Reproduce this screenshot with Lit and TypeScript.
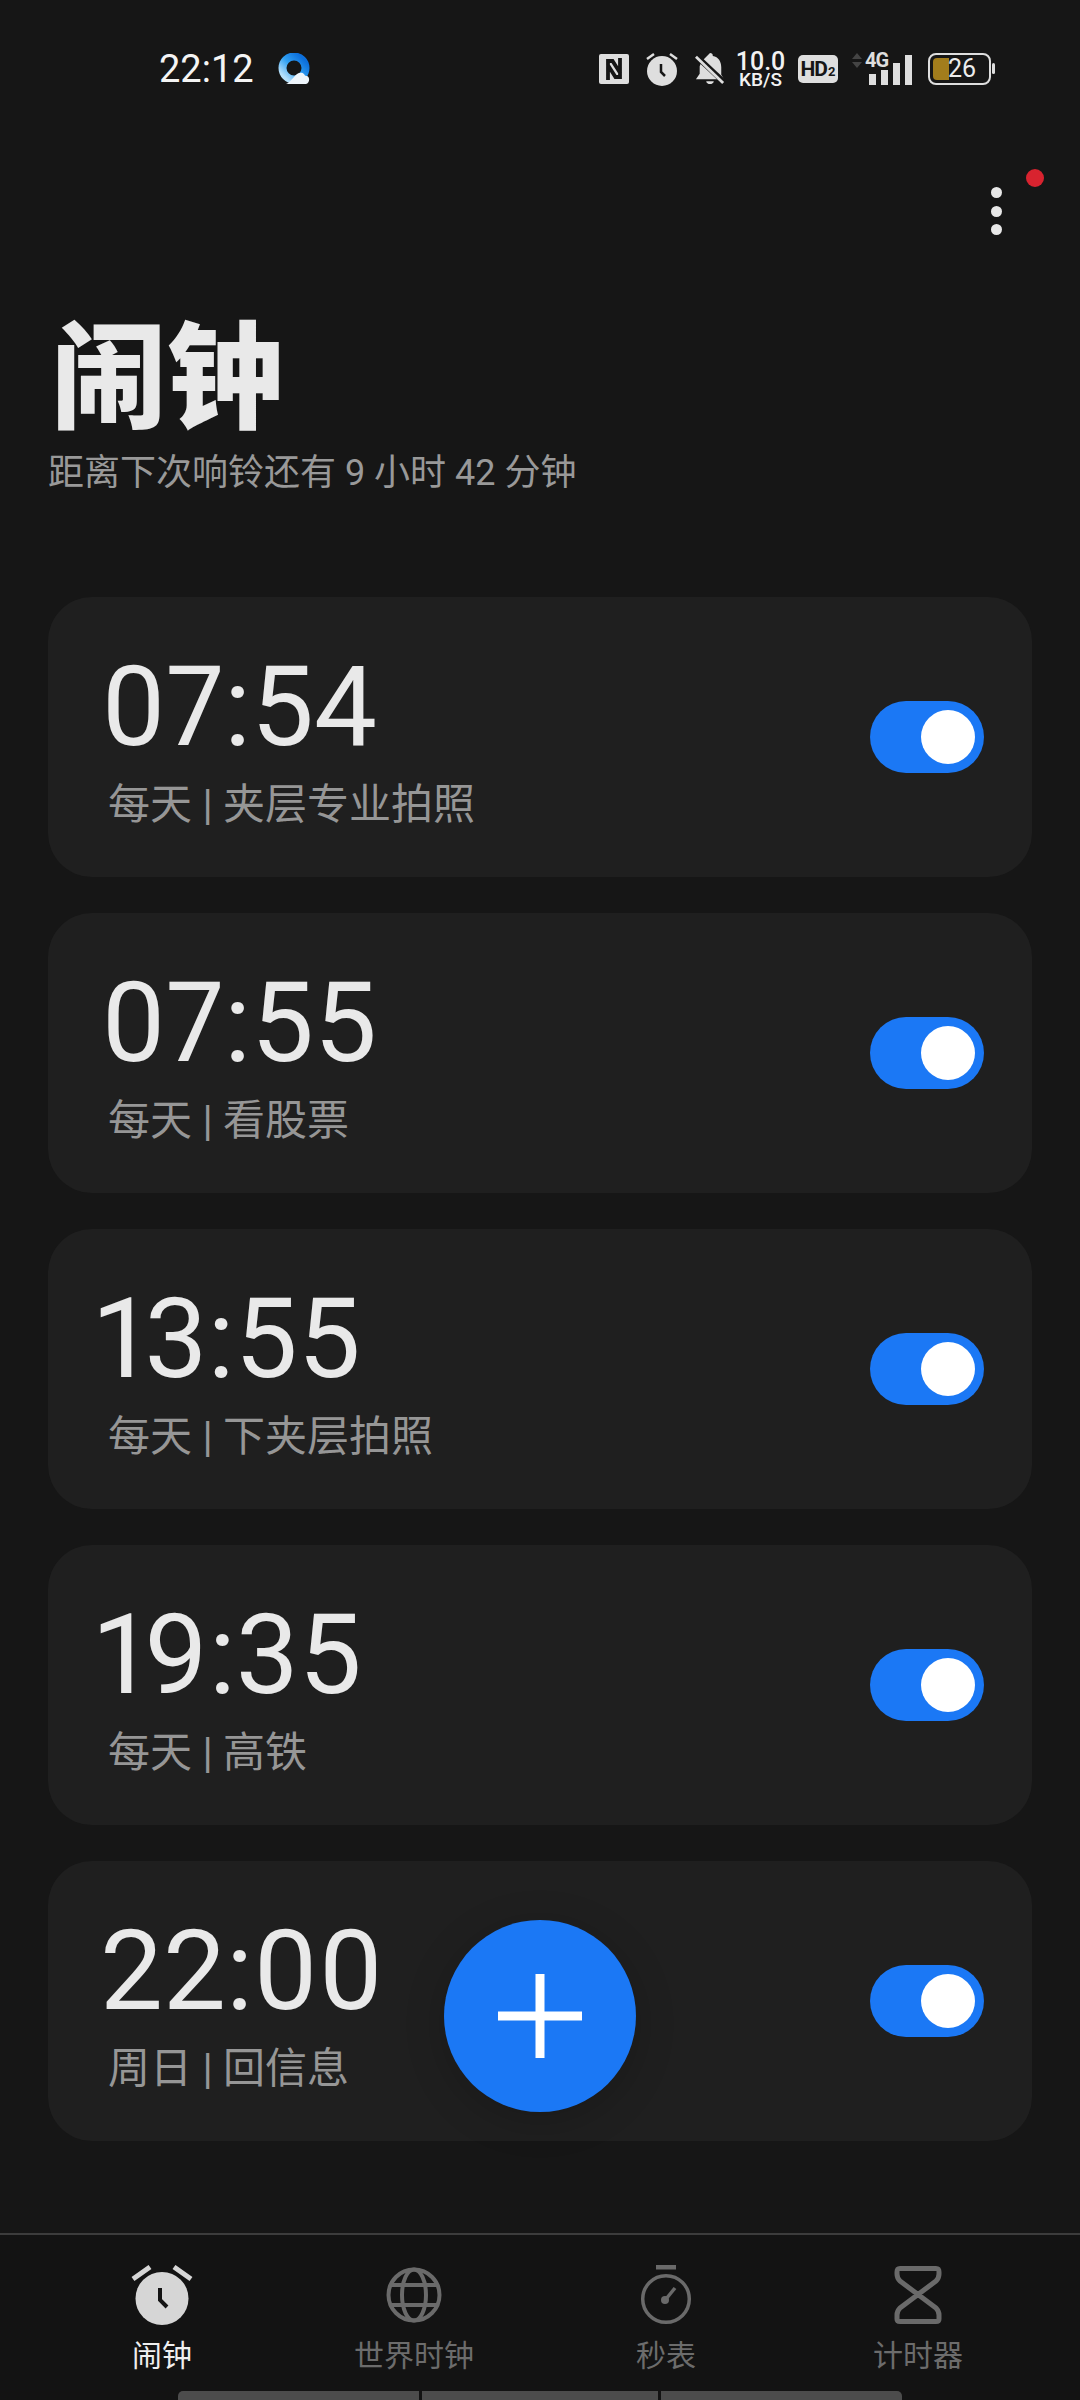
import { LitElement, html, css, svg } from "lit";
import { customElement } from "lit/decorators.js";

const alarms = [
  { time: "07:54", label: "每天 | 夹层专业拍照", shift: -7 },
  { time: "07:55", label: "每天 | 看股票", shift: -7 },
  { time: "13:55", label: "每天 | 下夹层拍照", shift: -12 },
  { time: "19:35", label: "每天 | 高铁", shift: -12 },
  { time: "22:00", label: "周日 | 回信息", shift: -8 },
];

const nfc = svg`<svg width="30" height="30" viewBox="0 0 30 30"><rect width="30" height="30" rx="2" fill="#dedede"/><path d="M9 26V7h4.500l8 12.500M21 4v19h-4.500l-7-11" fill="none" stroke="#161616" stroke-width="3.800"/></svg>`;
const alarmSmall = svg`<svg width="32" height="34" viewBox="0 0 32 34"><circle cx="16" cy="19" r="15" fill="#dedede"/><path d="M1 7l7-5M31 7l-7-5" stroke="#dedede" stroke-width="2.500"/><path d="M15 12v8l4 4" fill="none" stroke="#161616" stroke-width="2.500"/></svg>`;
const bell = svg`<svg width="30" height="32" viewBox="0 0 32 34"><path d="M16 0c2 0 3 1 3 3 6 1 9 6 9 12v8l3 5H1l4-6v-8l2-5z" fill="#dedede"/><path d="M12 30h8c0 2-2 3-4 3s-4-1-4-3z" fill="#dedede"/><path d="M1 3l30 28" stroke="#161616" stroke-width="6"/><path d="M1 4l29 28" stroke="#dedede" stroke-width="3"/></svg>`;
const navAlarm = svg`<svg width="62" height="64" viewBox="0 0 62 64"><circle cx="31" cy="33.500" r="26.500" fill="#d6d6d6"/><path d="M2 14l17-12M60 14L43 2" stroke="#d6d6d6" stroke-width="5"/><path d="M29 23v12l7 7" fill="none" stroke="#141414" stroke-width="4"/></svg>`;
const navGlobe = svg`<svg width="62" height="64" viewBox="0 0 62 64"><g fill="none" stroke="#6a6a6a" stroke-width="4"><circle cx="31" cy="30" r="25.500"/><ellipse cx="31" cy="30" rx="12" ry="25.500"/><path d="M8 20h46M8 40h46"/></g></svg>`;
const navWatch = svg`<svg width="62" height="64" viewBox="0 0 62 64"><rect x="21" y="0" width="20" height="4.500" fill="#6a6a6a"/><circle cx="31" cy="34" r="23.300" fill="none" stroke="#6a6a6a" stroke-width="3.500"/><path d="M31 34l9-11" stroke="#6a6a6a" stroke-width="3.500"/><circle cx="30" cy="35" r="4" fill="#6a6a6a"/></svg>`;
const navHour = svg`<svg width="62" height="64" viewBox="0 0 62 64"><path d="M13 3.500h36c3 0 3 2 3 3.500v2c0 3-1 5-3 7L31 29.500 13 43c-2 2-3 4-3 7v4c0 2 1 2.500 3 2.500h36c2 0 3-.5 3-2.500v-4c0-3-1-5-3-7L31 29.500 13 16c-2-2-3-4-3-7V7c0-1.500 0-3.500 3-3.500z" fill="none" stroke="#6a6a6a" stroke-width="5" stroke-linejoin="round"/></svg>`;
const plus = svg`<svg width="84" height="84" viewBox="0 0 84 84"><path d="M42 0v84M0 42h84" stroke="#fff" stroke-width="9"/></svg>`;
const logo = svg`<svg width="32" height="32" viewBox="0 0 32 32"><defs><linearGradient id="q" x1="0.900" y1="0.100" x2="0.100" y2="0.900"><stop offset="0" stop-color="#0c6fdc"/><stop offset="0.500" stop-color="#2f9ff2"/><stop offset="1" stop-color="#b5e0fb"/></linearGradient></defs><circle cx="16" cy="15" r="11.500" fill="none" stroke="url(#q)" stroke-width="8"/><path d="M8 31c3-1 5-4 8-7 2-3 7-6 10-3 1 2 2 2 3 2 3 1 3 7-1 8z" fill="#eef5fb"/></svg>`;
const signal = svg`<svg width="60" height="32" viewBox="0 0 60 32"><path d="M5 0l5 6H0zM5 15l5-6H0z" fill="#444"/><g fill="#dedede"><rect x="17" y="21" width="7" height="11"/><rect x="29" y="17" width="7" height="15"/><rect x="41" y="10" width="7" height="22"/><rect x="53" y="2" width="7" height="30"/></g></svg>`;
const battery = svg`<svg width="67" height="32" viewBox="0 0 67 32"><rect x="1" y="1" width="61" height="30" rx="7" fill="none" stroke="#dedede" stroke-width="2"/><path d="M9 5h12v22H9a4 4 0 0 1-4-4V9a4 4 0 0 1 4-4z" fill="#a27d1c"/><rect x="64" y="10" width="3" height="11" rx="1.500" fill="#dedede"/></svg>`;

@customElement("app-root")
export class AppRoot extends LitElement {
  static styles = css`
    :host { display: flex; flex-direction: column; position: relative; width: 1080px; height: 2400px; background: #161616; color: #e8e8e8; font-family: Roboto, "Noto Sans CJK SC", sans-serif; overflow: hidden; }
    svg { display: block; flex: none; }
    .status { display: flex; align-items: center; height: 68px; padding: 0 85px 0 159px; flex: none; margin-top: 35px; }
    .clock { font-size: 38px; color: #f4f4f4; line-height: 68px; width: 119px; }
    .icons { margin-left: auto; display: flex; align-items: center; }
    .m17 { margin-left: 17px; }
    .speed { margin-left: 11px; width: 49px; text-align: center; color: #f2f2f2; font-weight: 500; display: flex; flex-direction: column; align-items: center; }
    .speed b { font-size: 25px; line-height: 21px; font-weight: 500; }
    .speed i { font-size: 19px; line-height: 16px; font-style: normal; font-weight: 500; }
    .hd { margin-left: 13px; width: 40px; height: 28px; border-radius: 5px; background: #dedede; color: #161616; font-size: 21px; font-weight: 700; line-height: 28px; text-align: center; letter-spacing: -1px; white-space: nowrap; }
    .hd sub { font-size: 13px; vertical-align: baseline; letter-spacing: 0; margin-left: 1px; }
    .sig { position: relative; margin-left: 14px; }
    .sig span { position: absolute; left: 13px; top: -3px; font-size: 20px; font-weight: 700; color: #dedede; line-height: 20px; letter-spacing: -1px; }
    .bat { position: relative; margin-left: 16px; }
    .bat span { position: absolute; left: 20px; top: 0; line-height: 32px; font-size: 25px; color: #ececec; }
    .menu-row { display: flex; justify-content: flex-end; padding-right: 78px; position: relative; height: 68px; margin-top: 84px; flex: none; }
    .dots { display: flex; flex-direction: column; gap: 7.500px; }
    .dots i { display: block; width: 11px; height: 11px; border-radius: 50%; background: #e8e8e8; }
    .red { position: absolute; right: 36px; top: -18px; width: 18px; height: 18px; border-radius: 50%; background: #d8232f; }
    .head { padding-left: 48px; margin-top: 43px; flex: none; }
    .title { font-family: "Noto Sans CJK SC", sans-serif; font-size: 116px; font-weight: 900; line-height: 140px; color: #e9e9e9; padding-left: 3px; }
    .sub { font-size: 36px; line-height: 48px; color: #999; margin-top: 11px; }
    .list { display: flex; flex-direction: column; gap: 36px; padding: 0 48px; margin-top: 100px; flex: none; }
    .card { height: 280px; border-radius: 44px; background: #1f1f1f; display: flex; align-items: center; justify-content: space-between; padding: 0 48px 0 60px; }
    .info { padding-top: 9px; }
    .time { font-size: 112px; line-height: 112px; color: #e9e9e9; font-feature-settings: "pnum"; }
    .label { font-size: 42px; line-height: 56px; color: #969696; margin-top: 14px; }
    .toggle { width: 114px; height: 72px; border-radius: 36px; background: #1b78f5; display: flex; align-items: center; justify-content: flex-end; padding-right: 9px; box-sizing: border-box; flex: none; }
    .toggle i { display: block; width: 54px; height: 54px; border-radius: 50%; background: #fff; }
    .fab { position: absolute; left: 444px; top: 1920px; width: 192px; height: 192px; border-radius: 50%; background: #1b78f5; display: flex; align-items: center; justify-content: center; box-shadow: 0 8px 40px rgba(0,0,0,.18); }
    .nav { margin-top: auto; border-top: 2px solid #3c3c3c; background: #131313; height: 158px; box-sizing: border-box; display: flex; padding: 30px 36px 0; flex: none; }
    .tab { flex: 1; display: flex; flex-direction: column; align-items: center; color: #6c6c6c; font-size: 30px; font-family: "Noto Sans CJK SC", sans-serif; }
    .tab span { line-height: 40px; margin-top: 4px; }
    .tab.on { color: #efefef; }
    .home { height: 9px; background: #131313; display: flex; justify-content: center; gap: 3px; flex: none; }
    .home i { display: block; background: #4c4c4c; height: 9px; }
    .home i:first-child { width: 241px; border-radius: 5px 0 0 0; }
    .home i:nth-child(2) { width: 236px; }
    .home i:last-child { width: 241px; border-radius: 0 5px 0 0; }
  `;

  render() {
    return html`
      <div class="status">
        <div class="clock">22:12</div>
        ${logo}
        <div class="icons">
          ${nfc}
          <div class="m17">${alarmSmall}</div>
          <div class="m17">${bell}</div>
          <div class="speed"><b>10.0</b><i>KB/S</i></div>
          <div class="hd">HD<sub>2</sub></div>
          <div class="sig">${signal}<span>4G</span></div>
          <div class="bat">${battery}<span>26</span></div>
        </div>
      </div>
      <div class="menu-row">
        <div class="dots"><i></i><i></i><i></i></div>
        <div class="red"></div>
      </div>
      <div class="head">
        <div class="title">闹钟</div>
        <div class="sub">距离下次响铃还有 9 小时 42 分钟</div>
      </div>
      <div class="list">
        ${alarms.map(
          (a) => html`<div class="card">
            <div class="info">
              <div class="time" style="margin-left:${a.shift}px">${a.time}</div>
              <div class="label">${a.label}</div>
            </div>
            <div class="toggle"><i></i></div>
          </div>`
        )}
      </div>
      <div class="fab">${plus}</div>
      <div class="nav">
        <div class="tab on">${navAlarm}<span>闹钟</span></div>
        <div class="tab">${navGlobe}<span>世界时钟</span></div>
        <div class="tab">${navWatch}<span>秒表</span></div>
        <div class="tab">${navHour}<span>计时器</span></div>
      </div>
      <div class="home"><i></i><i></i><i></i></div>
    `;
  }
}
